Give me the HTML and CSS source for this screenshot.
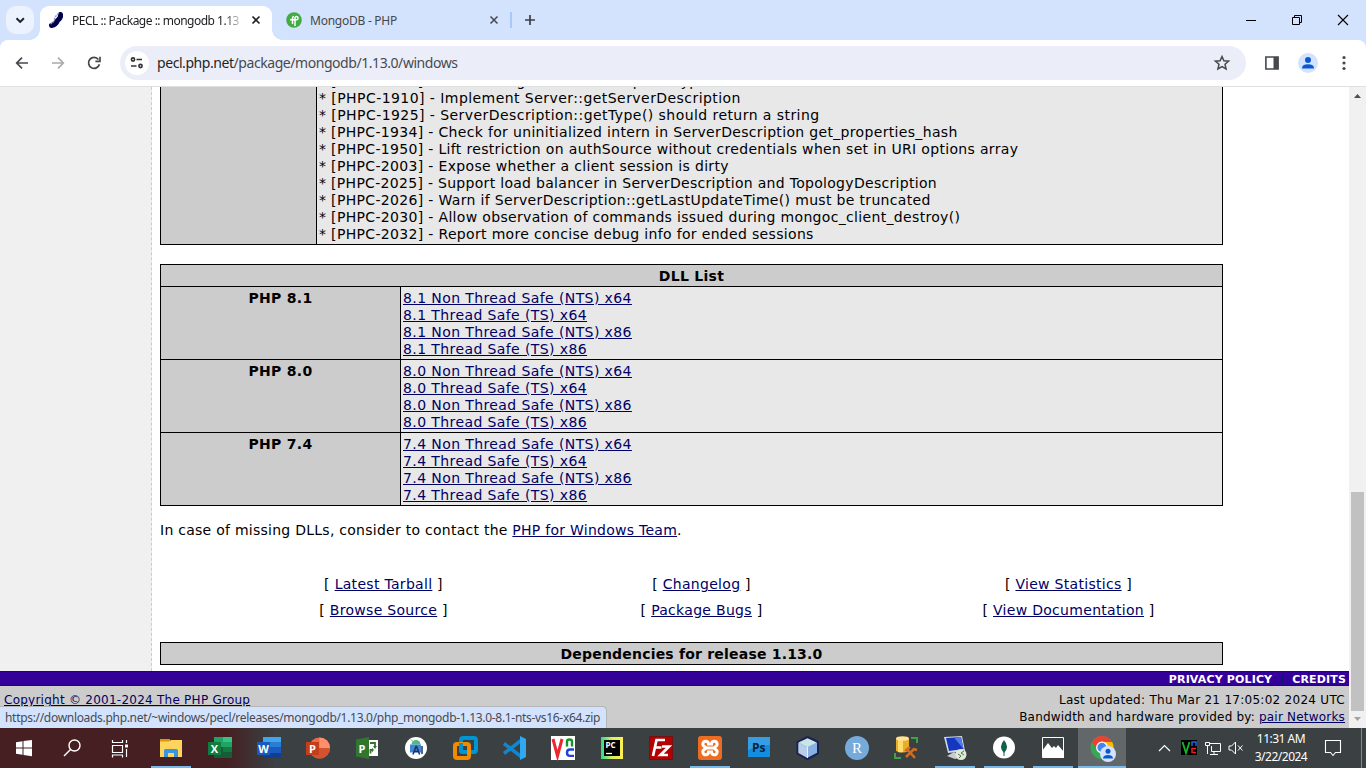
FILE: index.html
```html
<!DOCTYPE html>
<html lang="en">
<head>
<meta charset="utf-8">
<title>PECL :: Package :: mongodb 1.13.0</title>
<link rel="stylesheet" href="styles.css">
</head>
<body>
<header class="tabstrip">
  <button class="tab-search"><svg width="28" height="28"><path d="M10.5 12.2l3.7 3.7 3.7-3.7" fill="none" stroke="#202124" stroke-width="2"/></svg></button>
  <div class="tab tab-active">
    <svg width="16" height="18" viewBox="0 0 16 18"><path d="M12.5 3.5Q13 7 9.500 9.500Q8 13.500 3.500 14.500" fill="none" stroke="#00004c" stroke-width="5" stroke-linecap="round"/><path d="M11 2.500Q6.500 5 6.500 9Q5 12 2.500 13" fill="none" stroke="#8f8fbd" stroke-width="1.300" stroke-dasharray="2 1"/></svg>
    <span class="tab-title">PECL :: Package :: mongodb 1.13</span>
    <svg class="close" width="10" height="10"><path d="M1.500 1.500l7 7m0-7l-7 7" stroke="#202124" stroke-width="1.600"/></svg>
  </div>
  <div class="tab tab-idle">
    <svg width="16" height="16"><circle cx="8" cy="8" r="7.800" fill="#42ab43"/><path d="M4 7.800h8M6.500 12V6.500Q6.500 4.500 8 4.500M9 14V6.500Q9 4.500 10.500 4.500Q12 4.500 12 6.200Q12 7.800 10.500 7.800" fill="none" stroke="#fff" stroke-width="1.500"/></svg>
    <span class="tab-title">MongoDB - PHP</span>
    <svg class="close" width="10" height="10"><path d="M1.500 1.500l7 7m0-7l-7 7" stroke="#45484c" stroke-width="1.500"/></svg>
  </div>
  <span class="tab-divider"></span>
  <svg class="new-tab" width="12" height="12"><path d="M6 1v10M1 6h10" stroke="#3c4043" stroke-width="1.700"/></svg>
  <div class="window-buttons">
    <svg width="46" height="40"><path d="M18 20.500h10" stroke="#000"/></svg>
    <svg width="46" height="40"><path d="M18.500 17.500h7v7h-7zM20.500 17.500v-2h7v7h-2" fill="none" stroke="#000"/></svg>
    <svg width="46" height="40"><path d="M18 15l10 10m0-10L18 25" stroke="#000" stroke-width="1.100"/></svg>
  </div>
</header>
<nav class="toolbar-wrap"><div class="toolbar">
  <svg class="tool" width="36" height="36"><path d="M24 18H13m5-5.300L12.700 18l5.300 5.300" fill="none" stroke="#45484c" stroke-width="1.700"/></svg>
  <svg class="tool" width="36" height="36"><path d="M12 18h11m-5-5.300l5.300 5.300-5.300 5.300" fill="none" stroke="#a9abad" stroke-width="1.700"/></svg>
  <svg class="tool" width="36" height="36"><path d="M22.400 14.500a5.500 5.500 0 1 0 1 4.700M24 11.800v4.500h-4.600" fill="none" stroke="#45484c" stroke-width="1.700"/></svg>
  <div class="omnibox">
    <svg width="24" height="24"><circle cx="12" cy="12" r="12" fill="#fff"/><g fill="none" stroke="#303236" stroke-width="1.600"><circle cx="8" cy="8.500" r="1.600"/><path d="M11.500 8.500H17M6 15h5.500"/><circle cx="15.500" cy="15" r="1.600"/></g></svg>
    <span class="url"><b>pecl.php.net</b>/package/mongodb/1.13.0/windows</span>
    <svg class="star" width="18" height="18"><path d="M9 2.500l1.900 4.300 4.700.4-3.600 3.100 1.100 4.600L9 12.500l-4.100 2.400L6 10.300 2.400 7.200l4.700-.4z" fill="none" stroke="#45484c" stroke-width="1.500"/></svg>
  </div>
  <svg class="panel-icon" width="16" height="16"><path d="M1.900 2h12.200v12H1.900z" fill="none" stroke="#45484c" stroke-width="1.600"/><path d="M9.500 2H14v12H9.500z" fill="#45484c"/></svg>
  <svg class="avatar" width="20" height="20"><circle cx="10" cy="10" r="10" fill="#d3e3fd"/><circle cx="10" cy="7" r="3" fill="#0b57d0"/><path d="M4 15.500Q4 11.300 10 11.300T16 15.500z" fill="#0b57d0"/></svg>
  <svg class="kebab" width="6" height="16"><g fill="#45484c"><circle cx="3" cy="2.500" r="1.600"/><circle cx="3" cy="8" r="1.600"/><circle cx="3" cy="13.500" r="1.600"/></g></svg>
</div></nav>

<div class="viewport">
  <div class="page">
    <div class="columns">
      <aside class="sidebar"></aside>
      <main class="main">
        <div class="notes">
          <div class="notes-label"></div>
          <div class="notes-text">
            <p>* [PHPC-1839] - Referencing the base exception types</p>
            <p class="wide">* [PHPC-1910] - Implement Server::getServerDescription</p>
            <p class="wide">* [PHPC-1925] - ServerDescription::getType() should return a string</p>
            <p>* [PHPC-1934] - Check for uninitialized intern in ServerDescription get_properties_hash</p>
            <p>* [PHPC-1950] - Lift restriction on authSource without credentials when set in URI options array</p>
            <p>* [PHPC-2003] - Expose whether a client session is dirty</p>
            <p class="narrow">* [PHPC-2025] - Support load balancer in ServerDescription and TopologyDescription</p>
            <p>* [PHPC-2026] - Warn if ServerDescription::getLastUpdateTime() must be truncated</p>
            <p>* [PHPC-2030] - Allow observation of commands issued during mongoc_client_destroy()</p>
            <p>* [PHPC-2032] - Report more concise debug info for ended sessions</p>
          </div>
        </div>
        <div class="dll">
          <div class="dll-head">DLL List</div>
          <div class="dll-name">PHP 8.1</div>
          <div class="dll-links"><a>8.1 Non Thread Safe (NTS) x64</a><a>8.1 Thread Safe (TS) x64</a><a>8.1 Non Thread Safe (NTS) x86</a><a>8.1 Thread Safe (TS) x86</a></div>
          <div class="dll-name">PHP 8.0</div>
          <div class="dll-links"><a>8.0 Non Thread Safe (NTS) x64</a><a>8.0 Thread Safe (TS) x64</a><a>8.0 Non Thread Safe (NTS) x86</a><a>8.0 Thread Safe (TS) x86</a></div>
          <div class="dll-name">PHP 7.4</div>
          <div class="dll-links"><a>7.4 Non Thread Safe (NTS) x64</a><a>7.4 Thread Safe (TS) x64</a><a>7.4 Non Thread Safe (NTS) x86</a><a>7.4 Thread Safe (TS) x86</a></div>
        </div>
        <p class="missing">In case of missing DLLs, consider to contact the <a>PHP for Windows Team</a>.</p>
        <div class="actions">
          <span>[ <a>Latest Tarball</a> ]</span><span>[ <a>Changelog</a> ]</span><span>[ <a>View Statistics</a> ]</span>
          <span>[ <a>Browse Source</a> ]</span><span>[ <a>Package Bugs</a> ]</span><span>[ <a>View Documentation</a> ]</span>
        </div>
        <div class="deps">Dependencies for release 1.13.0</div>
      </main>
    </div>
    <div class="foot-bar"><span>PRIVACY POLICY</span><i>|</i><span>CREDITS</span></div>
    <footer class="foot">
      <a>Copyright © 2001-2024 The PHP Group</a>
      <div class="foot-right">Last updated: Thu Mar 21 17:05:02 2024 UTC<br><span class="hosting">Bandwidth and hardware provided by: <a>pair Networks</a></span></div>
    </footer>
  </div>
  <div class="scrollbar">
    <svg width="17" height="17"><path d="M5 11l3.500-4L12 11z" fill="#505050"/></svg>
    <div class="thumb"></div>
    <svg width="17" height="17"><path d="M5 6l3.500 4L12 6z" fill="#a3a3a3"/></svg>
  </div>
  <div class="status">https://downloads.php.net/~windows/pecl/releases/mongodb/1.13.0/php_mongodb-1.13.0-8.1-nts-vs16-x64.zip</div>
</div>

<div class="taskbar">
  <svg class="sys" viewBox="0 0 48 40"><path d="M16 14.300l6.500-1v6.300H16zM23.500 13.100l8.500-1.200v7.700h-8.500zM16 20.500h6.500v6.300l-6.500-1zM23.500 20.500H32v7.700l-8.500-1.200z" fill="#fff"/></svg>
  <svg class="sys" viewBox="0 0 48 40"><g fill="none" stroke="#fff" stroke-width="1.400"><circle cx="26.500" cy="17.500" r="5.500"/><path d="M22.500 21.500L16 28"/></g></svg>
  <svg class="sys" viewBox="0 0 48 40"><path d="M16.500 12v2.500h10V12M16.500 17.500h10v7h-10zM16.500 29.500v-2.500h10v2.500M30.500 12v3M30.500 21v8" fill="none" stroke="#fff" stroke-width="1.200"/><path d="M29 16.500h3v3h-3z" fill="#fff"/></svg>
  <div class="apps">
    <div class="app run"><svg viewBox="0 0 48 40"><path d="M13 11h10v4H13z" fill="#d99a08"/><path d="M13 13.500h9l2-1.500h11v17H13z" fill="#ffd45c"/><path d="M17 29v-6.500Q17 21 18.500 21h11q1.500 0 1.500 1.500V29h-4v-4h-6v4z" fill="#3a95dc"/></svg></div>
    <div class="app"><svg viewBox="0 0 48 40"><path d="M18 9h18v21H18z" fill="#185c37"/><path d="M18 9h9v10h-9z" fill="#21a366"/><path d="M27 9h9v5h-9z" fill="#33c481"/><path d="M27 14h9v5h-9z" fill="#21a366"/><path d="M27 19h9v5h-9z" fill="#107c41"/><path d="M12 14h13v13H12z" fill="#107c41"/><text x="18.500" y="24.500" class="glyph">X</text></svg></div>
    <div class="app"><svg viewBox="0 0 48 40"><path d="M18 9h18v5H18z" fill="#41a5ee"/><path d="M18 14h18v5H18z" fill="#2b7cd3"/><path d="M18 19h18v6H18z" fill="#185abd"/><path d="M18 25h18v5H18z" fill="#103f91"/><path d="M12 14h13v13H12z" fill="#185abd"/><text x="18.500" y="24.500" class="glyph">W</text></svg></div>
    <div class="app"><svg viewBox="0 0 48 40"><circle cx="25.500" cy="20" r="10.500" fill="#ed6c47"/><path d="M25.500 9.500A10.500 10.500 0 0 1 36 20H25.500z" fill="#ff8f6b"/><path d="M15 20h21a10.500 10.500 0 0 1-21 0" fill="#d35230"/><path d="M12 14h13v13H12z" fill="#c43e1c"/><text x="18.500" y="24.500" class="glyph">P</text></svg></div>
    <div class="app"><svg viewBox="0 0 48 40"><path d="M24 12h11v16H24z" fill="#fff"/><path d="M27 15h5v4M27.500 25.500V22h3" fill="none" stroke="#31752f" stroke-width="1.800"/><path d="M30 18h4l-2 3zM30 20v4l-3-2z" fill="#31752f"/><path d="M13 11.500L26 9v22l-13-2.500z" fill="#31752f"/><text x="19" y="24.500" class="glyph">P</text></svg></div>
    <div class="app"><svg viewBox="0 0 48 40"><circle cx="24" cy="20" r="11" fill="#fff"/><path d="M19.500 16.500a4.500 4.500 0 0 1 9 0z" fill="#4cbd7b"/><path d="M20.500 13l-1.500-1.500" stroke="#4cbd7b"/><path d="M18 16.500h11v8H18z" fill="#4285d5"/><path d="M21 26.500l3-8h.6l3 8M22 23.500h5M30 18v8" fill="none" stroke="#17365f" stroke-width="1.500"/></svg></div>
    <div class="app"><svg viewBox="0 0 48 40" fill="none" stroke-width="4"><rect x="20" y="10" width="15" height="14" rx="2" stroke="#0095d3"/><rect x="14" y="16" width="14" height="14" rx="2" stroke="#f38b00"/><path d="M20 15v7q0 2 2 2h4" stroke="#0095d3"/></svg></div>
    <div class="app"><svg viewBox="0 0 48 40"><path d="M31 12.500L14 25.500M14 15.500l17 13" stroke="#0f86d2" stroke-width="3.500"/><path d="M30 8l6 3v18l-6 3z" fill="#2fa8ef"/></svg></div>
    <div class="app"><svg viewBox="0 0 48 40"><path d="M12 8h24v24H12z" fill="#fff"/><path d="M14 11l4.500 17L23 11" fill="none" stroke="#eb2730" stroke-width="3"/><path d="M28 18.500v-5q0-2 2.500-2t2.500 2v5" fill="none" stroke="#14932b" stroke-width="2.400"/><path d="M35 21.500h-4q-3 0-3 3.200t3 3.200h4" fill="none" stroke="#2140d8" stroke-width="2.400"/></svg></div>
    <div class="app"><svg viewBox="0 0 48 40"><defs><linearGradient id="pc"><stop stop-color="#30d789"/><stop offset=".5" stop-color="#d8ef5c"/><stop offset="1" stop-color="#fff04e"/></linearGradient></defs><path d="M13 9h22v22H13z" fill="url(#pc)"/><path d="M16 12h16v16H16z" fill="#000"/><text x="17.500" y="19.500" class="pc-text">PC</text><path d="M18 25.500h6" stroke="#fff" stroke-width="1.300"/></svg></div>
    <div class="app"><svg viewBox="0 0 48 40"><path d="M12.500 8.500h23v23h-23z" fill="#b40000" stroke="#780000" stroke-dasharray="1 1"/><path d="M16 28l3.500-16H28M17.500 19.500h7M25 18.500h7L23.500 27H31" fill="none" stroke="#fff" stroke-width="2.700"/></svg></div>
    <div class="app run"><svg viewBox="0 0 48 40"><rect x="12" y="8" width="24" height="24" rx="3" fill="#ed6c22"/><g fill="none" stroke="#fff" stroke-width="3"><path d="M22.500 17.500V16a2.800 2.800 0 1 0-4 2.600q2 1.400 0 2.800a2.800 2.800 0 1 0 4 2.600v-1.500"/><path d="M25.500 17.500V16a2.800 2.800 0 1 1 4 2.600q-2 1.400 0 2.800a2.800 2.800 0 1 1-4 2.600v-1.500M20 20h8"/></g></svg></div>
    <div class="app"><svg viewBox="0 0 48 40"><path d="M13 9h22v20H13z" fill="#128de0"/><path d="M13 9h22v8q-11 0-22 5z" fill="#369fe4"/><text x="17" y="23.500" class="ps-text">Ps</text></svg></div>
    <div class="app"><svg viewBox="0 0 48 40"><path d="M23.500 9L34 14v11.500L23.500 31 13.500 25.500V14z" fill="#87b0e4" stroke="#1c214d" stroke-width="2"/><path d="M23.500 10.500l9 4-9 4.500-9-4.500z" fill="#c9e5e4"/><path d="M14.500 15l9 4.500V30l-9-5z" fill="#b9cde9"/><path d="M23.500 19v11" stroke="#eaf3fa"/></svg></div>
    <div class="app"><svg viewBox="0 0 48 40"><circle cx="24" cy="20" r="12" fill="#75aadb"/><text x="24" y="24.800" class="r-text">R</text></svg></div>
    <div class="app"><svg viewBox="0 0 48 40"><path d="M14 10v13q6 3 13 0V10z" fill="#e9ad2c"/><path d="M16 10v14q3 .7 5 0V10z" fill="#ffdc69"/><ellipse cx="20.500" cy="10.500" rx="6.500" ry="2.300" fill="#ffe493"/><path d="M29 10h6v5M13 25v5h6" fill="none" stroke="#43a047" stroke-width="2"/><path d="M24 29l8-8M25 21l8 9M23 23l5-4M31 21l4 1" stroke="#d76b1d" stroke-width="2.500"/></svg></div>
    <div class="app run"><svg viewBox="0 0 48 40"><path d="M13 9l18-1 3 15-17 2z" fill="#d2dae5"/><path d="M15 10l15-1 2.500 12-14.500 2z" fill="#1438bd"/><path d="M23 9.500l7-.5 2.500 12z" fill="#5478e8"/><path d="M16 28l7-4 8 5-7 2z" fill="#c7cdd2"/><circle cx="30" cy="26.500" r="5.500" fill="#e1e8da"/><path d="M27 26l3 2-2 2m5-7l-3 2 3 2" fill="none" stroke="#428040"/></svg></div>
    <div class="app run"><svg viewBox="0 0 48 40"><circle cx="24" cy="19.500" r="11" fill="#fff"/><path d="M24 12q-6 7 0 13 6-6 0-13z" fill="#116149"/><path d="M24 24v4" stroke="#116149"/></svg></div>
    <div class="app run"><svg viewBox="0 0 48 40"><path d="M13.500 9.500h21v20h-21z" fill="none" stroke="#fff"/><path d="M13 29v-6l6-8 4 5 2-2 2 2 2-3 6 7v6z" fill="#fff"/></svg></div>
    <div class="app run current"><svg viewBox="0 0 48 40"><circle cx="24" cy="19.500" r="11.500" fill="#34a853"/><path d="M14 13.700A11.500 11.500 0 0 1 34 13.700L24 20z" fill="#ea4335"/><path d="M24 14h10.200A11.500 11.500 0 0 1 24 31z" fill="#fbbc04"/><path d="M14 13.700L19 22l5-8.300z" fill="#ea4335"/><circle cx="24" cy="19.500" r="5.300" fill="#4285f4" stroke="#fff" stroke-width="1.300"/><circle cx="30" cy="26" r="8" fill="#d3e3fd"/><circle cx="30" cy="23.300" r="2.500" fill="#0b57d0"/><path d="M25 30.500q0-3.500 5-3.500t5 3.500z" fill="#0b57d0"/></svg></div>
  </div>
  <div class="tray">
    <svg width="90" height="40"><path d="M4 23l5.500-5.500L15 23" fill="none" stroke="#fff" stroke-width="1.200"/><path d="M26 12h16v15H26z" fill="#000"/><path d="M27.500 14l3.500 11L34.500 14" fill="none" stroke="#18b52b" stroke-width="1.800"/><path d="M37 18v-4h4v4" fill="none" stroke="#1c62ef" stroke-width="1.500"/><path d="M41 20.500h-4v4h4" fill="none" stroke="#ed1c24" stroke-width="1.500"/><path d="M54.500 15.500h11v8h-9V18M50.500 14.500h4v3h-4zM52.500 18v8M55 26.500h8M59 24v3" fill="none" stroke="#fff"/><path d="M74 18h2.500l4-4v12l-4-4H74zM83 17.500l4.500 5m0-5l-4.500 5" fill="none" stroke="#fff"/></svg>
    <div class="clock">11:31 AM<br>3/22/2024</div>
    <svg class="notice" width="20" height="40"><path d="M2.500 12.500h15v12h-5l-2.500 3-2.500-3h-5z" fill="none" stroke="#fff" stroke-width="1.100"/></svg>
    <span class="peek"></span>
  </div>
</div>
</body>
</html>
```
FILE: styles.css
```css
* { box-sizing: border-box; }
body { margin: 0; width: 1366px; height: 768px; overflow: hidden; display: flex; flex-direction: column; background: #d3e3fd; font-family: "DejaVu Sans", Verdana, sans-serif; }
svg { display: block; flex: none; }
p { margin: 0; }
.tabstrip, .toolbar, .url, .status, .clock { font-family: "Noto Sans", "Open Sans", sans-serif; }

.tabstrip { height: 40px; flex: none; display: flex; align-items: center; padding-left: 6px; }
.tab-search { width: 28px; height: 28px; padding: 0; border: 0; border-radius: 10px; background: #ecf3fe; }
.tab { display: flex; align-items: center; height: 34px; font-size: 12px; color: #202124; }
.tab-active { position: relative; width: 232px; margin: 6px 0 0 6px; padding: 0 11px 6px 8px; background: #fff; border-radius: 9px 9px 0 0; }
.tab-active::before, .tab-active::after { content: ""; position: absolute; bottom: 0; width: 10px; height: 10px; }
.tab-active::before { left: -10px; background: radial-gradient(circle at 0 0, transparent 9.500px, #fff 10px); }
.tab-active::after { right: -10px; background: radial-gradient(circle at 100% 0, transparent 9.500px, #fff 10px); }
.tab-title { white-space: nowrap; letter-spacing: -.5px; }
.tab-active .tab-title { width: 172px; margin-left: 8px; -webkit-mask-image: linear-gradient(90deg, #000 152px, transparent 172px); mask-image: linear-gradient(90deg, #000 152px, transparent 172px); }
.tab-idle { width: 238px; padding: 0 11px 0 14px; color: #45484c; }
.tab-idle .tab-title { margin-left: 8px; letter-spacing: -.25px; }
.close { margin-left: auto; }
.tab-divider { width: 2px; height: 16px; background: #a8c7fa; }
.new-tab { margin-left: 12px; }
.window-buttons { display: flex; margin-left: auto; }

.toolbar-wrap { height: 47px; flex: none; background: #d3e3fd; }
.toolbar { height: 47px; padding: 0 19px 0 4px; display: flex; align-items: center; background: #fff; border-radius: 8px 8px 0 0; border-bottom: 1px solid #dfe0e2; }
.omnibox { width: 1126px; height: 34px; margin-left: 8px; padding: 0 15px 0 5px; display: flex; align-items: center; border-radius: 17px; background: #ebeef8; }
.url { margin: -1px 0 0 8px; font-size: 14px; letter-spacing: -.44px; color: #474a50; }
.url b { font-weight: 400; color: #1f1f1f; }
.star { margin-left: auto; }
.panel-icon { margin-left: 18px; }
.avatar { margin-left: 18px; }
.kebab { margin-left: auto; }

.viewport { position: relative; height: 641px; flex: none; display: flex; background: #fff; }
.page { width: 1349px; display: flex; flex-direction: column; overflow: hidden; font-size: 14px; line-height: 17px; letter-spacing: .3px; color: #000; }
.columns { height: 584px; display: flex; }
.sidebar { width: 152px; background: #f0f0f0; border-right: 1px dashed #ccc; }
.main { width: 1071px; padding-left: 8px; }
.page a { color: #000066; text-decoration: underline; }
.notes { height: 158px; display: grid; grid-template-columns: 155px 1fr; border: 1px solid #000; border-top: 0; }
.notes-label { background: #ccc; }
.notes-text { display: flex; flex-direction: column; justify-content: flex-end; overflow: hidden; padding: 0 2px 1px; border-left: 1px solid #000; background: #e8e8e8; white-space: nowrap; letter-spacing: .33px; }
.notes-text p { flex: none; }
.notes-text .wide { letter-spacing: .44px; }
.notes-text .narrow { letter-spacing: .3px; }
.dll { margin-top: 19px; display: grid; grid-template-columns: 239px 1fr; gap: 1px; padding: 1px; background: #000; }
.dll > div { padding: 3px 2px 1px; }
.dll-head { grid-column: span 2; background: #ccc; }
.dll-head, .dll-name, .deps { text-align: center; font-weight: 700; }
.dll-name { background: #ccc; }
.dll-links { display: flex; flex-direction: column; align-items: flex-start; background: #e8e8e8; letter-spacing: .4px; }
.missing { margin-top: 16px; letter-spacing: .26px; }
.actions { margin-top: 37px; display: grid; grid-template-columns: 447px 189px 1fr; row-gap: 9px; text-align: center; }
.actions span:nth-child(3n) { padding-left: 118px; }
.deps { margin-top: 23px; padding: 3px 2px 1px; border: 1px solid #000; background: #ccc; letter-spacing: .2px; }
.foot-bar { height: 15px; display: flex; justify-content: flex-end; padding: 1px 3px 0; background: #330099; border: solid #002a00; border-width: 1px 0; color: #fff; font-size: 11px; line-height: 13px; font-weight: 700; letter-spacing: .15px; }
.foot-bar i { width: 20px; text-align: center; font-style: normal; font-weight: 400; color: #002a00; }
.foot { height: 42px; display: flex; justify-content: space-between; padding: 6px 4px 0; background: #ccc; font-size: 12px; letter-spacing: .25px; }
.foot-right { text-align: right; letter-spacing: .28px; }
.hosting { letter-spacing: .2px; }
.scrollbar { width: 17px; display: flex; flex-direction: column; justify-content: space-between; background: #f1f1f1; }
.thumb { width: 13px; height: 219px; margin: 388px 2px 0; background: #c1c1c1; }
.status { position: absolute; left: 0; bottom: 0; width: 607px; height: 22px; padding-left: 5px; line-height: 21px; font-size: 12px; letter-spacing: -.31px; color: #474a50; white-space: nowrap; background: #d3e3fd; border: solid #b3b5b8; border-width: 1px 1px 0 0; border-radius: 0 5px 0 0; }

.taskbar { height: 40px; flex: none; display: flex; background: linear-gradient(90deg, #451f21 225px, #3b4042 275px); color: #fff; }
.sys { width: 48px; height: 40px; }
.apps { margin-left: 3px; display: flex; gap: 1px; }
.app { width: 48px; height: 40px; background: no-repeat center bottom / 40px 2px; }
.run { background-image: linear-gradient(#76b9ed, #76b9ed); }
.current { background-color: #62676a; background-size: 48px 2px; }
.glyph { font: 700 11px "Open Sans", sans-serif; fill: #fff; text-anchor: middle; }
.pc-text { font: 700 8px "Open Sans", sans-serif; fill: #fff; }
.ps-text { font: 700 12px "Open Sans", sans-serif; fill: #06243d; }
.r-text { font: 15px "Liberation Serif", serif; fill: #fff; text-anchor: middle; }
.tray { flex: 1; display: flex; margin-left: 29px; }
.clock { width: 72px; text-align: center; font-size: 12px; line-height: 18px; padding-top: 2px; letter-spacing: -.5px; }
.notice { margin-left: 6px; }
.peek { width: 1px; height: 40px; margin-left: auto; margin-right: 4px; background: #85898a; }
```
